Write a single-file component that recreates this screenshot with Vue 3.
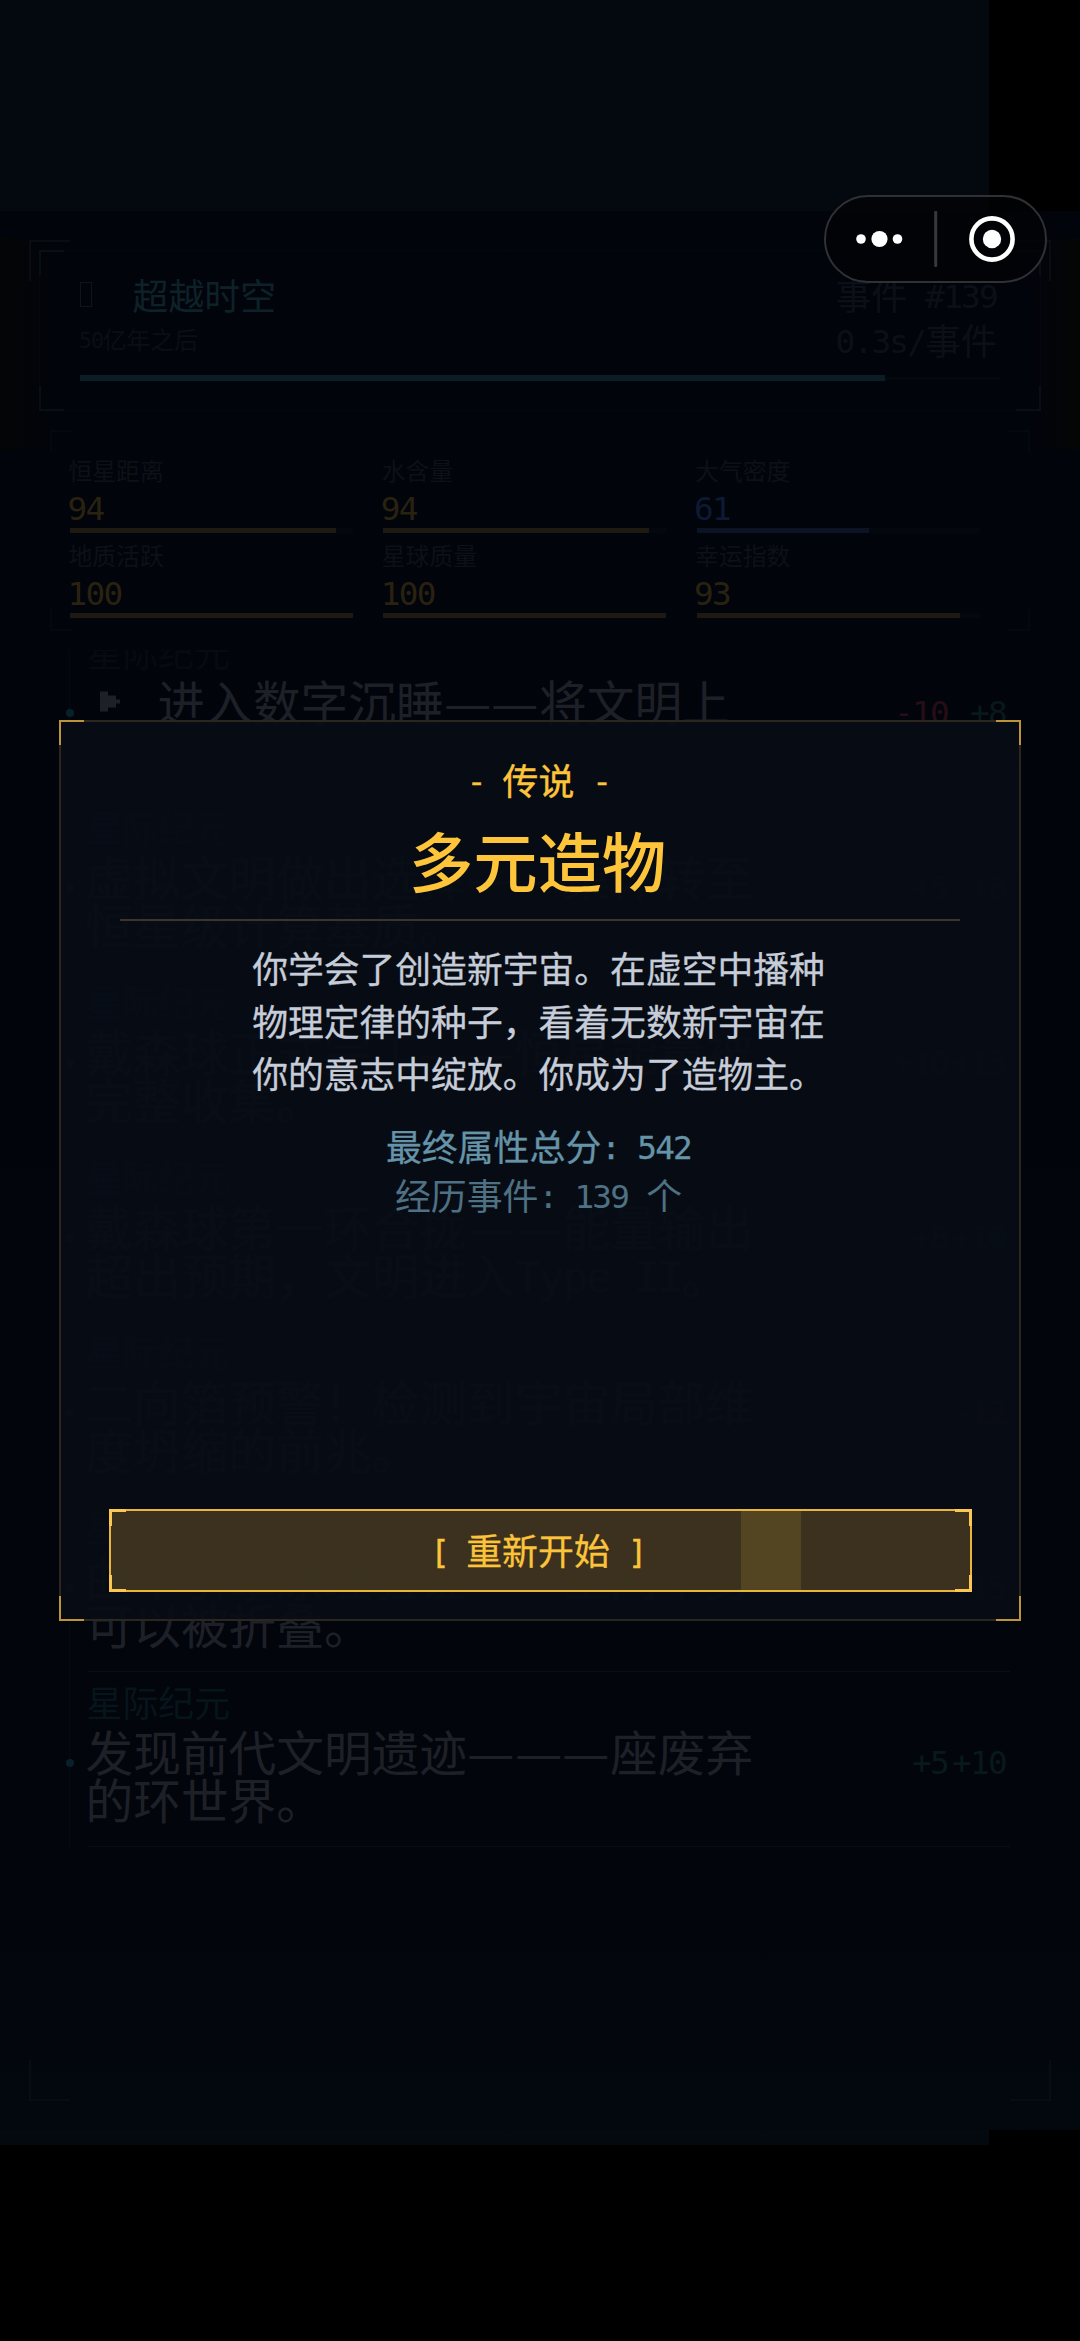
<script setup>
import { h } from 'vue'

// Splits a string into CJK, dash and Latin runs so every glyph keeps its cell width.
const Mixed = (props) =>
  h(
    'span',
    { class: 'mixed' },
    props.text
      .split(/([\x20-\x7e]+|—)/)
      .filter(Boolean)
      .map((run) => {
        if (run === '—') return h('span', { class: 'dash' }, run)
        return /^[\x20-\x7e]/.test(run) ? h('span', { class: 'half' }, run) : run
      })
  )
Mixed.props = ['text']

const stats = [
  { label: '恒星距离', value: 94, tone: 'gold' },
  { label: '水含量', value: 94, tone: 'gold' },
  { label: '大气密度', value: 61, tone: 'blue' },
  { label: '地质活跃', value: 100, tone: 'gold' },
  { label: '星球质量', value: 100, tone: 'gold' },
  { label: '幸运指数', value: 93, tone: 'gold' }
]

const events = [
  { era: '星际纪元', lines: ['进入数字沉睡——将文明上'], deltas: ['-10', '+8'], latest: true },
  { era: '星际纪元', lines: ['虚拟文明做出选择——集体转至', '恒星级计算基质。'], deltas: ['+5', '+8'] },
  { era: '星际纪元', lines: ['戴森球正式完工——恒星能量被', '完整收集。'], deltas: ['+10', '+15'] },
  { era: '星际纪元', lines: ['戴森球第一环合拢——能量输出', '超出预期，文明进入Type II。'], deltas: ['+8', '+10'] },
  { era: '星际纪元', lines: ['二向箔预警！检测到宇宙局部维', '度坍缩的前兆。'], deltas: ['-12'] },
  { era: '星际纪元', lines: ['曲率引擎原理验证——空间本身', '可以被折叠。'], deltas: ['+15'] },
  { era: '星际纪元', lines: ['发现前代文明遗迹———座废弃', '的环世界。'], deltas: ['+5', '+10'] }
]
</script>

<template>
  <div class="screen">
    <div class="frame corners"></div>

    <header class="era corners">
      <div class="era-row">
        <div>
          <div class="era-name"><i class="glyph"></i><span>超越时空</span></div>
          <div class="era-date"><Mixed text="50亿年之后" /></div>
        </div>
        <div class="era-meta">
          <div><Mixed text="事件 #139" /></div>
          <div><Mixed text="0.3s/事件" /></div>
        </div>
      </div>
      <div class="era-track"><div class="era-fill" style="width: 87.5%"></div></div>
    </header>

    <section class="stats corners">
      <div v-for="s in stats" :key="s.label" class="stat" :class="s.tone">
        <div class="stat-label">{{ s.label }}</div>
        <div class="stat-value">{{ s.value }}</div>
        <div class="stat-track"><div class="stat-fill" :style="{ width: s.value + '%' }"></div></div>
      </div>
    </section>

    <section class="log">
      <div class="log-list">
        <article v-for="(e, i) in events" :key="i" class="event" :class="{ latest: e.latest }">
          <div class="event-era">{{ e.era }}</div>
          <div class="event-row">
            <div class="event-text">
              <div v-for="(line, n) in e.lines" :key="n" class="event-line">
                <svg v-if="e.latest && n === 0" class="marker" width="72" height="48" viewBox="0 0 72 48">
                  <path d="M14 14.500h8v4h8v4h4v4h-4v4h-8v4h-8z" fill="currentColor" />
                </svg>
                <Mixed :text="line" />
              </div>
            </div>
            <div class="deltas">
              <span v-for="d in e.deltas" :key="d" :class="d[0] === '-' ? 'loss' : 'gain'">{{ d }}</span>
            </div>
          </div>
        </article>
      </div>
    </section>

    <div class="capsule">
      <svg width="222" height="88" viewBox="0 0 222 88">
        <circle cx="37" cy="44" r="4.8" fill="#fff" />
        <circle cx="55.500" cy="44" r="8.1" fill="#fff" />
        <circle cx="73.500" cy="44" r="4.8" fill="#fff" />
        <rect x="110.200" y="16" width="3" height="56" rx="1" fill="#37383c" />
        <circle cx="168" cy="44" r="20.6" fill="none" stroke="#fff" stroke-width="4.6" />
        <circle cx="168" cy="44" r="9.2" fill="#fff" />
      </svg>
    </div>

    <div class="modal corners">
      <div class="rank"><Mixed text="- 传说 -" /></div>
      <h1 class="title">多元造物</h1>
      <div class="divider"></div>
      <p class="story">你学会了创造新宇宙。在虚空中播种<br />物理定律的种子，看着无数新宇宙在<br />你的意志中绽放。你成为了造物主。</p>
      <div class="summary">
        <div class="score"><Mixed text="最终属性总分: 542" /></div>
        <div class="count"><Mixed text="经历事件: 139 个" /></div>
      </div>
      <button class="restart corners">
        <i class="sheen"></i>
        <Mixed text="[ 重新开始 ]" />
      </button>
    </div>
  </div>
</template>

<style>
body {
  background: #000;
}
.mixed,
.half {
  white-space: pre;
}
.half {
  font-family: 'DejaVu Sans Mono', monospace;
  font-size: 0.91em;
  letter-spacing: -0.0525em;
  line-height: 0;
  vertical-align: 0.05em;
}
.dash {
  display: inline-block;
  width: 1em;
  text-align: center;
  transform: scaleX(1.12);
}
</style>

<style scoped>
.screen {
  position: relative;
  box-sizing: border-box;
  width: 1080px;
  height: 2341px;
  padding-top: 250px;
  overflow: hidden;
  font-family: 'Noto Sans CJK SC', sans-serif;
  font-size: 35.9px;
  color: #1e2028;
  background:
    linear-gradient(90deg, #040505, transparent 50px, transparent 1030px, #040505) 0 238px / 1080px 212px no-repeat,
    linear-gradient(#02040b, #02050c 90%, #03070e) 0 211px / 1080px 1919px no-repeat,
    linear-gradient(#040910, #040910) 0 0 / 989px 2145px no-repeat,
    #000;
}

/* L-shaped marks in the four corners of a box */
.corners::after {
  content: '';
  position: absolute;
  inset: var(--out, 0px);
  pointer-events: none;
  --g: linear-gradient(var(--c), var(--c));
  background:
    var(--g) 0 0 / var(--l) var(--w), var(--g) 0 0 / var(--w) var(--l),
    var(--g) 100% 0 / var(--l) var(--w), var(--g) 100% 0 / var(--w) var(--l),
    var(--g) 0 100% / var(--l) var(--w), var(--g) 0 100% / var(--w) var(--l),
    var(--g) 100% 100% / var(--l) var(--w), var(--g) 100% 100% / var(--w) var(--l);
  background-repeat: no-repeat;
}
.frame {
  position: absolute;
  inset: 240px 29px;
  --c: #080d14;
  --l: 41px;
  --w: 2px;
}

.era {
  position: relative;
  box-sizing: border-box;
  height: 161px;
  margin: 0 39px;
  padding: 21px 40px 0;
  border: 1px solid #04070e;
  --c: #081017;
  --l: 25px;
  --w: 2px;
  --out: -1px;
}
.era-row {
  display: flex;
  justify-content: space-between;
  height: 91px;
}
.era-name {
  display: flex;
  align-items: center;
  gap: 41px;
  height: 44px;
  line-height: 44px;
  color: #0d2128;
}
.glyph {
  box-sizing: border-box;
  width: 11.5px;
  height: 25px;
  border: 1.5px solid #0b161d;
}
.era-date {
  margin: 8px 0 0 -1px;
  line-height: 30px;
  font-size: 23.8px;
  color: #0a0e15;
}
.era-meta {
  padding-right: 3px;
  line-height: 45px;
  color: #0b1018;
  text-align: right;
}
.era-track {
  margin-top: 12px;
  height: 6px;
  background: linear-gradient(#04080f, #04080f) 0 2px / 100% 3px no-repeat;
}
.era-fill {
  height: 6px;
  background: #0b1c24;
}

.stats {
  position: relative;
  display: grid;
  grid-template-columns: repeat(3, 283px);
  column-gap: 30.3px;
  row-gap: 7px;
  align-content: start;
  box-sizing: border-box;
  height: 201px;
  margin: 19px 50px 0;
  padding: 25px 20px 0;
  --c: #04080f;
  --l: 22px;
  --w: 2px;
}
.stat-label {
  margin-left: -1.5px;
  line-height: 30px;
  font-size: 23.8px;
  color: #0c1118;
}
.stat-value {
  margin: 7px 0 0 -2.5px;
  line-height: 34px;
  font-family: 'DejaVu Sans Mono', monospace;
  font-size: 32.7px;
  letter-spacing: -0.0525em;
}
.stat-track {
  margin-top: 2px;
  height: 5px;
  background: #04070e;
}
.stat-fill {
  height: 5px;
}
.gold .stat-value {
  color: #2a2210;
}
.gold .stat-fill {
  background: #1e1a12;
}
.blue .stat-value {
  color: #0c1a33;
}
.blue .stat-fill {
  background: #0b1325;
}

.log {
  height: 1200px;
  margin: 19px 70px 0 60px;
  overflow: hidden;
}
.log-list {
  margin-top: -28px;
  padding-left: 28px;
  background: linear-gradient(#040a10, #040a10) 9px 0 / 1px 100% no-repeat;
}
.event {
  position: relative;
  box-sizing: border-box;
  height: 175px;
  padding-top: 9px;
  border-bottom: 1.5px solid #090d14;
}
.event::before {
  content: '';
  position: absolute;
  left: -22px;
  top: 87px;
  width: 8px;
  height: 8px;
  border-radius: 50%;
  background: #08202a;
}
.event-era {
  margin-left: -1.5px;
  line-height: 40px;
  color: #06151b;
}
.latest .event-era {
  color: #060a12;
}
.event-row {
  display: flex;
  justify-content: space-between;
  margin-top: 6px;
}
.event-line {
  display: flex;
  margin-left: -2.5px;
  line-height: 48px;
  font-size: 47.7px;
}
.marker {
  flex: none;
}
.deltas {
  display: flex;
  gap: 4px;
  margin: 19px 4px 0 0;
  line-height: 34px;
  font-family: 'DejaVu Sans Mono', monospace;
  font-size: 32.7px;
  letter-spacing: -0.0525em;
}
.deltas span + span {
  min-width: 54px;
  text-align: right;
}
.gain {
  color: #08191c;
}
.loss {
  color: #270d16;
}

.capsule {
  position: absolute;
  left: 824px;
  top: 195px;
  box-sizing: border-box;
  width: 223px;
  height: 88px;
  border: 2.5px solid #303134;
  border-radius: 44px;
  background: rgba(2, 3, 6, 0.75);
}
.capsule svg {
  display: block;
  margin: -2px;
}

.modal {
  position: absolute;
  left: 59px;
  top: 720px;
  display: flex;
  flex-direction: column;
  align-items: center;
  box-sizing: border-box;
  width: 962px;
  height: 901px;
  padding: 37px 48px 27px;
  border: 2px solid #2b271f;
  background: rgba(8, 13, 22, 0.93);
  --c: #bd9437;
  --l: 25px;
  --w: 2.4px;
  --out: -2px;
}
.rank {
  padding-right: 3px;
  line-height: 40px;
  color: #fcc43a;
  -webkit-text-stroke: 0.4px #fcc43a;
}
.title {
  margin: 24px 0 0;
  padding-right: 5px;
  line-height: 72px;
  font-size: 64.3px;
  font-weight: 500;
  color: #fec53b;
}
.divider {
  width: 840px;
  height: 2px;
  margin-top: 24px;
  background: #3b352d;
}
.story {
  margin: 20px 0 0;
  padding-right: 3px;
  line-height: 52.5px;
  font-size: 35.8px;
  color: #c6ccd8;
  -webkit-text-stroke: 0.3px #c6ccd8;
  white-space: nowrap;
}
.summary {
  margin-top: 22px;
  padding-right: 3px;
  line-height: 49.5px;
  text-align: center;
}
.score {
  color: #6593a8;
  -webkit-text-stroke: 0.3px #6593a8;
}
.count {
  color: #4f7184;
}
.restart {
  position: relative;
  box-sizing: border-box;
  width: 863px;
  height: 83px;
  margin-top: auto;
  padding: 0 4px 2px 0;
  border: 2px solid #e9b53a;
  background: rgba(64, 53, 31, 0.93);
  font: inherit;
  line-height: 73px;
  color: #fcc43a;
  -webkit-text-stroke: 0.3px #fcc43a;
  --c: #fcc652;
  --l: 17px;
  --w: 3px;
  --out: -2px;
}
.sheen {
  position: absolute;
  left: 630px;
  top: 0;
  width: 60px;
  height: 100%;
  background: #544522;
}
</style>
